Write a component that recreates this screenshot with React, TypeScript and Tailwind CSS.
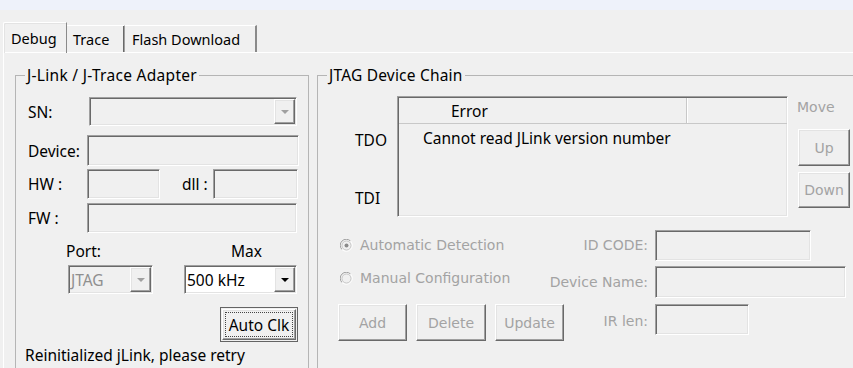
import React from 'react';

const sunken =
  'border border-t-[#a0a0a0] border-l-[#a0a0a0] border-r-white border-b-white shadow-[inset_1px_1px_0_#696969,inset_-1px_-1px_0_#e3e3e3]';
const raised =
  'border border-t-white border-l-white border-r-[#696969] border-b-[#696969] shadow-[inset_-1px_-1px_0_#a0a0a0,inset_1px_1px_0_#e3e3e3]';
const grayFont = "font-['DejaVu_Sans',sans-serif] text-[14px] text-[#a3a3a3]";

const Arrow = ({ disabled }: { disabled?: boolean }) => (
  <svg width="8" height="4" viewBox="0 0 8 4">
    <polygon points="0,0 8,0 4,4" fill={disabled ? '#a0a0a0' : '#000'} />
  </svg>
);

const Combo = ({ w, value, white, disabled }: { w: string; value?: string; white?: boolean; disabled?: boolean }) => (
  <div className={`${sunken} ${w} h-[29px] flex items-stretch ${white ? 'bg-white' : 'bg-[#f0f0f0]'}`}>
    <div className={`flex-1 flex items-center pl-[2px] ${disabled ? 'text-[#8f8f8f]' : 'text-black'}`}>{value}</div>
    <div className={`${raised} w-[21px] m-[1px] bg-[#f0f0f0] flex items-center justify-center`}>
      <Arrow disabled={disabled} />
    </div>
  </div>
);

const Field = ({ w, h = 'h-[30px]' }: { w: string; h?: string }) => <div className={`${sunken} ${w} ${h} bg-[#f0f0f0]`} />;

const Radio = ({ checked }: { checked?: boolean }) => (
  <svg width="13" height="13" viewBox="0 0 13 13">
    <path d="M2 10.5 A5.5 5.5 0 0 1 10.5 2" stroke="#a0a0a0" strokeWidth="1" fill="none" />
    <path d="M10.5 2 A5.5 5.5 0 0 1 2 10.5" stroke="#ffffff" strokeWidth="1" fill="none" />
    <circle cx="6.5" cy="6.5" r="4.5" fill="#f0f0f0" stroke="#c8c8c8" strokeWidth="1" />
    {checked && <circle cx="6.5" cy="6.5" r="2" fill="#8a8a8a" />}
  </svg>
);

const GrayButton = ({ label, w, h, ml }: { label: string; w: string; h: string; ml: string }) => (
  <div className={`${raised} ${w} ${h} ${ml} flex items-center justify-center ${grayFont}`}>{label}</div>
);

export default function App() {
  return (
    <div className="w-[853px] h-[368px] overflow-hidden bg-[#f0f0f0] font-['Noto_Sans',sans-serif] text-[15.5px] text-black leading-[18px]">
      <div className="h-[10px] bg-[#eef2fa]" />
      <div className="pl-[3px] pt-[12px]">
        {/* tabs */}
        <div className="flex items-end h-[30px] text-[14.5px]">
          <div className="relative z-10 -mb-px w-[64px] h-[31px] pl-[7px] flex items-center border-l border-t border-white border-r border-r-[#8a8a8a] rounded-tl-[2px] shadow-[inset_1px_1px_0_#e3e3e3]">
            Debug
          </div>
          <div className="w-[58px] h-[27px] pl-[6px] flex items-center border-t border-white border-r border-r-[#a0a0a0] shadow-[inset_-1px_0_0_#696969]">
            Trace
          </div>
          <div className="w-[132px] h-[27px] pl-[7px] flex items-center border-t border-white border-r-2 border-r-[#8a8a8a]">
            Flash Download
          </div>
        </div>

        <div className="border-t border-l border-white h-[400px] flex items-start">
          {/* J-Link adapter */}
          <fieldset className="shrink-0 ml-[11px] mt-[13px] w-[294px] h-[330px] border border-[#b5b5b5] pl-[12px] pt-[13px]">
            <legend className="-ml-[3px] px-[2px] tracking-[0.3px]">J-Link / J-Trace Adapter</legend>
            <div className="flex items-center h-[29px]">
              <span className="w-[61px]">SN:</span>
              <Combo w="w-[208px]" disabled />
            </div>
            <div className="flex items-center h-[31px] mt-[9px]">
              <span className="w-[59px]">Device:</span>
              <Field w="w-[212px]" h="h-[31px]" />
            </div>
            <div className="flex items-center h-[30px] mt-[3px]">
              <span className="w-[59px]">HW :</span>
              <Field w="w-[73px]" />
              <span className="ml-[22px] w-[31px]">dll :</span>
              <Field w="w-[85px]" />
            </div>
            <div className="flex items-center h-[30px] mt-[4px]">
              <span className="w-[59px]">FW :</span>
              <Field w="w-[210px]" />
            </div>
            <div className="flex mt-[9px]">
              <span className="ml-[38px]">Port:</span>
              <span className="ml-[130px]">Max</span>
            </div>
            <div className="flex mt-[5px]">
              <div className="ml-[40px]">
                <Combo w="w-[85px]" value="JTAG" disabled />
              </div>
              <div className="ml-[31px]">
                <Combo w="w-[113px]" value="500 kHz" white />
              </div>
            </div>
            <div className="flex mt-[13px]">
              <div className="ml-[192px] w-[78px] h-[35px] border border-[#646464] p-[1px]">
                <div className={`${raised} w-full h-full p-[2px]`}>
                  <div className="w-full h-full border border-dotted border-[#444] flex items-center justify-center">Auto Clk</div>
                </div>
              </div>
            </div>
            <div className="mt-[4px] -ml-[3px]">Reinitialized jLink, please retry</div>
          </fieldset>

          {/* JTAG chain */}
          <fieldset className="shrink-0 ml-[8px] mt-[13px] w-[560px] h-[330px] border border-[#b5b5b5] pl-[12px] pt-[12px]">
            <legend className="-ml-[3px] px-[2px] tracking-[0.2px]">JTAG Device Chain</legend>
            <div className="flex items-start">
              <div className="ml-[25px] w-[42px] flex flex-col pt-[35px]">
                <span>TDO</span>
                <span className="mt-[40px]">TDI</span>
              </div>
              <div className={`${sunken} w-[391px] h-[121px] bg-[#f0f0f0] flex flex-col`}>
                <div className="flex h-[26px] border-b border-[#c8c8c8] ml-[1px] mt-[1px]">
                  <div className="w-[288px] border-r border-[#c8c8c8] shadow-[1px_0_0_#fff] pl-[52px] flex items-center">Error</div>
                  <div className="flex-1" />
                </div>
                <div className="pl-[25px] pt-[5px]">Cannot read JLink version number</div>
              </div>
              <div className="ml-[9px] flex flex-col">
                <span className={`${grayFont} mt-[2px]`}>Move</span>
                <GrayButton label="Up" w="w-[52px]" h="h-[37px]" ml="ml-[1px] mt-[13px]" />
                <GrayButton label="Down" w="w-[52px]" h="h-[36px]" ml="ml-[1px] mt-[6px]" />
              </div>
            </div>

            <div className="flex items-center h-[32px] mt-[12px]">
              <div className="w-[318px] flex items-center justify-between">
                <div className={`ml-[10px] flex items-center gap-[7px] ${grayFont}`}>
                  <Radio checked />
                  <span>Automatic Detection</span>
                </div>
                <span className={grayFont}>ID CODE:</span>
              </div>
              <Field w="w-[156px] ml-[7px]" h="h-[31px]" />
            </div>
            <div className="flex items-center h-[32px] mt-[5px]">
              <div className="w-[318px] flex items-center justify-between">
                <div className={`ml-[10px] mb-[8px] flex items-center gap-[7px] ${grayFont}`}>
                  <Radio />
                  <span>Manual Configuration</span>
                </div>
                <span className={grayFont}>Device Name:</span>
              </div>
              <Field w="w-[191px] ml-[7px]" h="h-[32px]" />
            </div>
            <div className="flex items-start mt-[6px]">
              <div className="w-[318px] flex items-start justify-between">
                <div className="flex">
                  <GrayButton label="Add" w="w-[69px]" h="h-[37px]" ml="ml-[8px]" />
                  <GrayButton label="Delete" w="w-[70px]" h="h-[37px]" ml="ml-[9px]" />
                  <GrayButton label="Update" w="w-[69px]" h="h-[37px]" ml="ml-[9px]" />
                </div>
                <span className={`${grayFont} mt-[8px]`}>IR len:</span>
              </div>
              <Field w="w-[94px] ml-[7px]" h="h-[31px]" />
            </div>
          </fieldset>
        </div>
      </div>
    </div>
  );
}
